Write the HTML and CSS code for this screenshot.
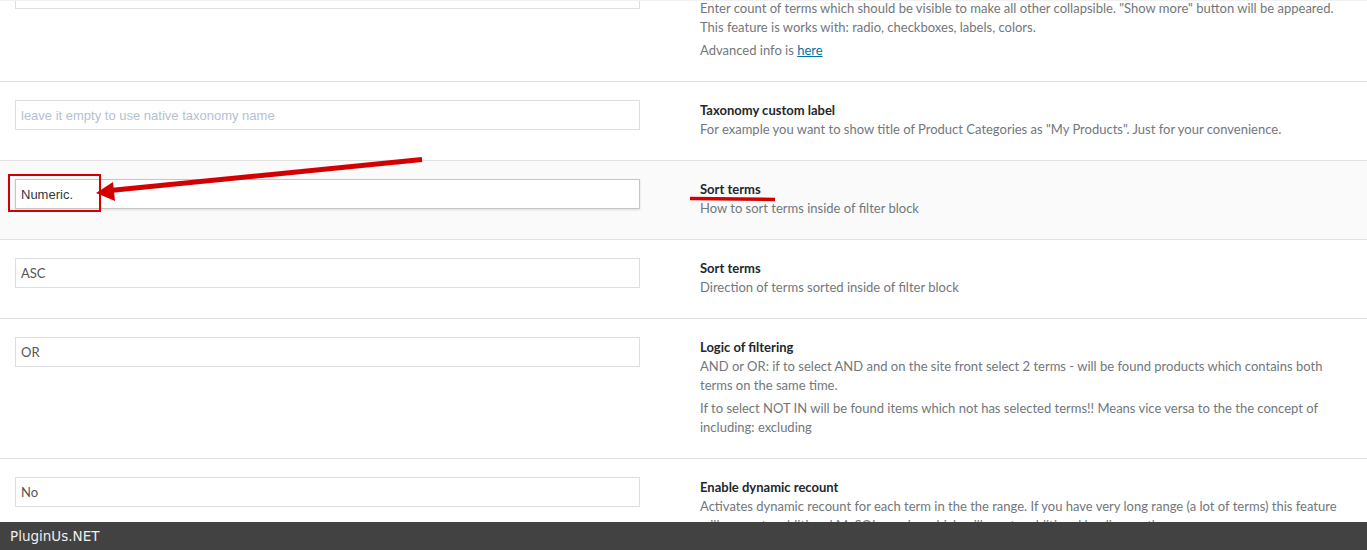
FILE: index.html
```html
<!DOCTYPE html>
<html lang="en">
<head>
    <meta charset="UTF-8">
    <meta name="viewport" content="width=device-width, initial-scale=1.0">
    <title>Filter item options</title>
    <link rel="stylesheet" href="styles.css">
</head>
<body>
<div class="viewport">
    <div class="options">
        <div class="option">
            <div class="option-field">
                <input class="field" type="text" value="">
            </div>
            <div class="option-info">
                <h4 class="option-title">Not toggled terms count</h4>
                <p>Enter count of terms which should be visible to make all other collapsible. "Show more" button will be appeared. This feature is works with: radio, checkboxes, labels, colors.</p>
                <p>Advanced info is <a href="#">here</a></p>
            </div>
        </div>

        <div class="option">
            <div class="option-field">
                <input class="field field-text" type="text" placeholder="leave it empty to use native taxonomy name">
            </div>
            <div class="option-info">
                <h4 class="option-title">Taxonomy custom label</h4>
                <p>For example you want to show title of Product Categories as "My Products". Just for your convenience.</p>
            </div>
        </div>

        <div class="option option-hover">
            <div class="option-field">
                <input class="field field-text field-active" type="text" value="Numeric.">
            </div>
            <div class="option-info">
                <h4 class="option-title">Sort terms</h4>
                <p>How to sort terms inside of filter block</p>
            </div>
        </div>

        <div class="option">
            <div class="option-field">
                <input class="field" type="text" value="ASC">
            </div>
            <div class="option-info">
                <h4 class="option-title">Sort terms</h4>
                <p>Direction of terms sorted inside of filter block</p>
            </div>
        </div>

        <div class="option">
            <div class="option-field">
                <input class="field" type="text" value="OR">
            </div>
            <div class="option-info">
                <h4 class="option-title">Logic of filtering</h4>
                <p>AND or OR: if to select AND and on the site front select 2 terms - will be found products which contains both terms on the same time.</p>
                <p>If to select NOT IN will be found items which not has selected terms!! Means vice versa to the the concept of including: excluding</p>
            </div>
        </div>

        <div class="option">
            <div class="option-field">
                <input class="field" type="text" value="No">
            </div>
            <div class="option-info">
                <h4 class="option-title">Enable dynamic recount</h4>
                <p>Activates dynamic recount for each term in the the range. If you have very long range (a lot of terms) this feature will generate additional MySQL queries which will create additional loading on the server.</p>
            </div>
        </div>
    </div>
</div>

<!-- annotations drawn over the screenshot -->
<svg class="marks" width="1367" height="550" viewBox="0 0 1367 550">
    <rect x="9" y="175" width="91" height="36" fill="none" stroke="#d40000" stroke-width="2"/>
    <line x1="422" y1="159.5" x2="110" y2="190.6" stroke="#d40000" stroke-width="5"/>
    <polygon points="96,193 113,182 115,201" fill="#d40000"/>
    <line x1="690" y1="198.5" x2="775" y2="199.5" stroke="#d40000" stroke-width="3.5"/>
</svg>

<div class="footer">PluginUs.NET</div>
</body>
</html>
```

FILE: styles.css
```css
* {
    margin: 0;
    padding: 0;
    box-sizing: border-box;
}

body {
    background: #fff;
    font-family: Lato, "Liberation Sans", sans-serif;
    font-size: 13px;
    color: #72777c;
}

.viewport {
    height: 550px;
    overflow: hidden;
    border-top: 1px solid #f1f1f1;
}

.options {
    margin-top: -40px;
}

.option {
    display: grid;
    grid-template-columns: 700px 1fr;
    border-bottom: 1px solid #e1e1e1;
}

.option-hover {
    background: #fafafa;
}

.option-field {
    padding: 18px 0 0 15px;
}

.field {
    display: block;
    width: 625px;
    height: 30px;
    padding: 0 5px;
    border: 1px solid #dedede;
    background: #fff;
    font-family: Lato, sans-serif;
    font-size: 13px;
    color: #555;
    outline: none;
}

.field-text {
    font-family: "Liberation Sans", Arial, sans-serif;
    color: #32373c;
}

.field-text::placeholder {
    color: #b3c1d3;
}

.field-active {
    border-color: #c6c6c6;
    box-shadow: 0 1px 2px rgba(0, 0, 0, 0.12);
}

.option-info {
    padding: 19px 15px 21px 0;
    line-height: 19px;
}

.option-title {
    font-size: 13px;
    font-weight: bold;
    color: #23282d;
}

.option-info p + p {
    margin-top: 4px;
}

.option-info a {
    color: #0073aa;
}

.marks {
    position: absolute;
    top: 0;
    left: 0;
    pointer-events: none;
}

.footer {
    position: fixed;
    left: 0;
    right: 0;
    bottom: 0;
    height: 28px;
    padding-left: 10px;
    background: #424242;
    color: #eee;
    font-family: "DejaVu Sans", sans-serif;
    font-size: 13.5px;
    line-height: 28px;
}
```
